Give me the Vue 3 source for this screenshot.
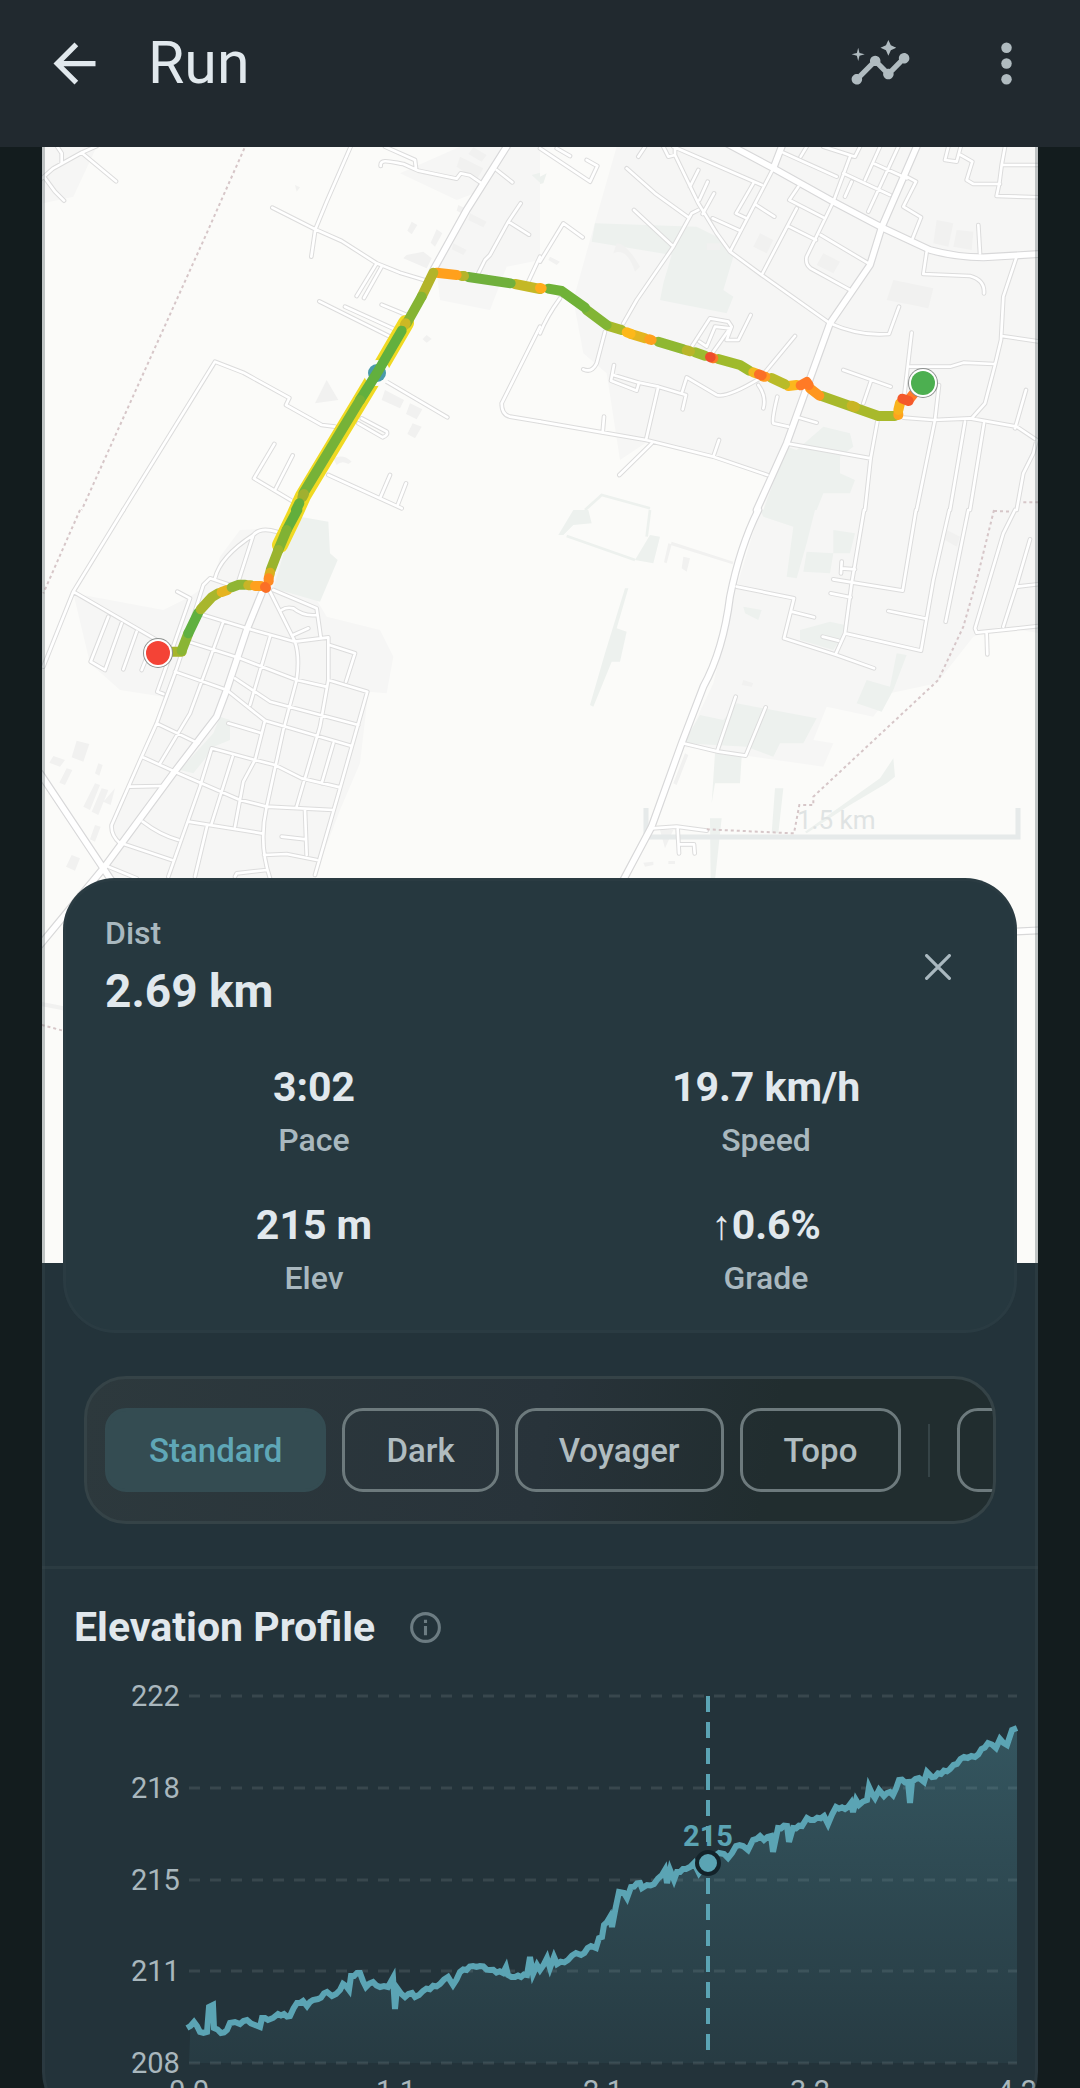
<template>
  <div class="screen">
    <header class="topbar">
      <button class="icon-btn" aria-label="Back">
        <svg class="ico" viewBox="0 0 24 24"><path d="M20 11H7.83l5.59-5.59L12 4l-8 8 8 8 1.41-1.41L7.83 13H20v-2z" /></svg>
      </button>
      <h1>Run</h1>
      <button class="icon-btn muted" aria-label="Insights">
        <svg class="ico" viewBox="0 0 24 24">
          <path d="M21 8c-1.45 0-2.26 1.44-1.93 2.51l-3.55 3.56c-.3-.09-.74-.09-1.04 0l-2.55-2.55C12.27 10.45 11.46 9 10 9c-1.45 0-2.27 1.44-1.93 2.52l-4.56 4.55C2.44 15.74 1 16.55 1 18c0 1.1.9 2 2 2 1.45 0 2.26-1.44 1.93-2.51l4.55-4.56c.3.09.74.09 1.04 0l2.55 2.55C12.73 16.55 13.54 18 15 18c1.45 0 2.27-1.44 1.93-2.52l3.56-3.55C21.56 12.26 23 11.45 23 10c0-1.1-.9-2-2-2z" />
          <path d="M15 9l.94-2.07L18 6l-2.06-.93L15 3l-.92 2.07L12 6l2.08.93zM3.5 11L4 9l2-.5L4 8l-.5-2L3 8l-2 .5L3 9z" />
        </svg>
      </button>
      <button class="icon-btn muted" aria-label="Menu">
        <svg class="ico" viewBox="0 0 24 24"><circle cx="12" cy="6" r="2" /><circle cx="12" cy="12" r="2" /><circle cx="12" cy="18" r="2" /></svg>
      </button>
    </header>

    <main class="panel">
      <svg class="map" viewBox="42 147 996 1116" preserveAspectRatio="xMidYMin slice">
        <rect x="42" y="147" width="996" height="1116" fill="#fbfbf9" />
        <g v-for="(t, i) in tiles" :key="'z' + i" :transform="tileTransform(t)">
          <path :d="t.urban" fill="#f6f6f5" />
          <path :d="t.green" fill="#edf1ee" />
          <path :d="t.buildings" fill="#f1f1f0" />
          <path :d="t.park" class="park" />
        </g>
        <path d="M646 808V837H1018V808" class="scale-bar" />
        <text x="797" y="829" class="scale-text">1.5 km</text>
        <g v-for="(t, i) in tiles" :key="'c' + i" :transform="tileTransform(t)">
          <path :d="t.minor" class="road minor-case" />
          <path :d="t.major" class="road major-case" />
        </g>
        <g v-for="(t, i) in tiles" :key="'r' + i" :transform="tileTransform(t)">
          <path :d="t.minor" class="road minor" />
          <path :d="t.major" class="road major" />
          <path :d="t.border" class="border" />
        </g>

        <!-- highlighted part of the track -->
        <path d="M406 323L377 373L303 496L294 516L280 545" class="highlight" />
        <circle cx="377" cy="373" r="13" fill="#fbfbf9" />
        <circle cx="377" cy="373" r="9" fill="#4a9aaa" />
        <g v-for="(t, i) in tiles" :key="'t' + i" :transform="tileTransform(t)">
          <path v-for="(s, j) in t.track" :key="j" :d="s[1]" :stroke="s[0]" class="track" />
        </g>
        <g v-for="m in markers" :key="m.color">
          <circle :cx="m.x" :cy="m.y" r="15" fill="#8d918f" />
          <circle :cx="m.x" :cy="m.y" r="14" fill="#fff" />
          <circle :cx="m.x" :cy="m.y" r="12" :fill="m.color" />
        </g>
      </svg>

      <section class="info">
        <div class="info-head">
          <div>
            <div class="label">Dist</div>
            <div class="dist">2.69 km</div>
          </div>
          <button class="close" aria-label="Close">
            <svg viewBox="0 0 24 24"><path d="M1.5 1.5l21 21M22.5 1.5l-21 21" /></svg>
          </button>
        </div>
        <div class="stats">
          <div v-for="s in stats" :key="s.label" class="stat">
            <div class="value">{{ s.value }}</div>
            <div class="label">{{ s.label }}</div>
          </div>
        </div>
      </section>

      <div class="layers">
        <button
          v-for="l in layers"
          :key="l"
          class="chip"
          :class="{ active: l === activeLayer }"
          @click="activeLayer = l"
        >{{ l }}</button>
        <span class="sep"></span>
        <button class="chip more" aria-label="More"></button>
      </div>

      <section class="elevation">
        <div class="title-row">
          <h2>Elevation Profile</h2>
          <svg class="hint" viewBox="0 0 24 24">
            <circle cx="12" cy="12" r="9" />
            <path d="M12 11v6M12 7v2" />
          </svg>
        </div>
        <svg class="chart" viewBox="42 1680 996 444">
          <defs>
            <linearGradient id="fill" gradientUnits="userSpaceOnUse" x1="0" y1="1696" x2="0" y2="2063">
              <stop offset="0" stop-color="#5ba4b4" stop-opacity=".33" />
              <stop offset="1" stop-color="#5ba4b4" stop-opacity=".07" />
            </linearGradient>
          </defs>
          <g v-for="g in grid" :key="g.label">
            <line x1="189" x2="1017" :y1="g.y" :y2="g.y" class="grid" />
            <text x="131" :y="g.y + 10" class="tick">{{ g.label }}</text>
          </g>
          <path :d="area" fill="url(#fill)" />
          <polyline :points="line" class="line" />
          <line x1="708" x2="708" y1="1696" y2="2054" class="cursor" />
          <text x="708" y="1846" class="cursor-text">215</text>
          <circle cx="708" cy="1863" r="11" class="cursor-dot" />
          <text v-for="t in ticks" :key="t.x" :x="t.x" y="2101" class="tick mid">{{ t.label }}</text>
        </svg>
      </section>
    </main>
  </div>
</template>

<script setup>
import { ref, computed } from 'vue';

const activeLayer = ref('Standard');
const layers = ['Standard', 'Dark', 'Voyager', 'Topo'];

const stats = [
  { value: '3:02', label: 'Pace' },
  { value: '19.7 km/h', label: 'Speed' },
  { value: '215 m', label: 'Elev' },
  { value: '↑0.6%', label: 'Grade' }
];

const markers = [
  { x: 158, y: 653, color: '#f44336' },
  { x: 923, y: 383, color: '#4caf50' }
];

// each tile is drawn in its own units, 3 per map pixel
const tileTransform = (t) => `translate(${t.x} ${t.y}) scale(0.33333)`;

const tiles = [
  {
    x: 40, y: 140,
    urban: 'M0 20H170L100 170L10 190ZM1080 100L1260 20H1500V360L1400 380L1350 510L1200 480L1190 390L1330 150L1250 180Z',
    green: 'M1475 105L1500 98V128Z',
    buildings: 'M1260 50L1330 85L1310 120L1250 80ZM1300 22L1340 45L1325 65L1285 42ZM1115 245L1132 255L1115 283L1102 272ZM1190 268L1207 280L1185 320L1172 308ZM1100 345L1150 335L1175 355L1160 385L1090 355ZM860 720L895 780L825 790ZM1035 750L1092 780L1080 805L1025 780ZM1110 790L1147 808L1130 838L1098 822ZM1118 850L1145 860L1125 895L1102 882ZM1255 195L1275 205L1265 220L1250 212ZM765 135L780 142L770 155ZM1160 585L1175 597L1160 608L1148 598ZM880 955Q910 940 935 965L925 972Q905 960 890 975ZM1290 220L1340 245L1330 262L1285 240ZM1240 310L1280 330L1270 345L1235 328Z',
    park: '',
    minor: 'M0 120L40 85L125 38L170 18M52 20L65 40V70M125 38L228 124M12 110L45 155L72 182M932 20L860 185L826 268L814 350M697 203L826 268L905 303L1010 370L1080 398L1160 422M1010 370L950 468M1025 380L972 474M1035 20L1125 60L1128 85M1022 78C1020 55 1050 65 1090 72L1135 92L1250 116L1262 100L1290 106L1325 130M1370 90L1417 127M1442 190L1405 245L1350 345L1335 360L1315 400M1405 245L1467 284M1500 350L1465 425M838 484L1050 590M915 500L1080 575M1025 494L1100 525M250 1110L525 665L610 698L748 774L738 795L845 855L885 860M1040 725L1222 832M965 835L1040 875Q1045 885 1028 892L955 850M703 912L642 1015L765 1088M758 946L705 1050M865 1005L1085 1105M1050 1005L1020 1075M1098 1030L1073 1095M1500 560L1385 790Q1385 825 1410 830L1500 845',
    major: 'M1400 20L1280 210L1180 390',
    border: 'M613 25L500 280L125 1110',
    track: [
      ['#c4b826', 'M1500 447L1425 432'],
      ['#70b03c', 'M1412 430L1285 411'],
      ['#b5b42b', 'M1265 408H1272'],
      ['#ffa01c', 'M1190 398L1250 405'],
      ['#b3b42a', 'M1180 398L1145 470'],
      ['#85b433', 'M1145 470L1100 550'],
      ['#cdb824', 'M1097 550L1094 556'],
      ['#62b03e', 'M1085 572L1011 699L960 780'],
      ['#76b238', 'M960 780L790 1060'],
      ['#a0b030', 'M792 1062L787 1072'],
      ['#62ae3c', 'M778 1090L768 1110']
    ]
  },
  {
    x: 540, y: 140,
    urban: 'M230 20H1500V1110H670L690 1000L330 900L240 960L200 700L130 640L100 480L150 300Z',
    green: 'M165 250L470 260L550 300L580 350L550 450L580 470L560 520L360 480L370 430L395 345L155 305ZM770 930L850 860L930 880L940 920L900 950V1000L945 1020L930 1060H850L830 1110H670L740 920Z M0 110L20 100L10 130L0 132Z',
    buildings: 'M1060 420L1180 445L1165 505L1040 480ZM1190 240L1240 250L1225 320L1180 310ZM1250 270L1300 275L1295 330L1240 320ZM230 310Q260 310 300 380L285 395Q260 320 220 340ZM660 280L700 300L680 340L640 320ZM850 340L900 365L880 400L830 375ZM500 310H540V330H500ZM30 350L60 365L50 375L25 360Z',
    park: 'M135 1110L185 1065L330 1105',
    minor: 'M0 25L150 125L172 78L140 60M50 25L90 48M260 85L345 160L445 232M282 210L395 315M295 50L315 20M370 20L385 50L405 45M405 20V45L475 190L530 280L570 335L665 405L870 550M400 20L665 135M475 90L450 140M503 125L478 180M522 160L488 222M475 210L455 220L400 320L290 480L250 550M640 130L588 220L620 235M700 85L570 335M518 235L600 272M648 195L703 230M775 140L748 180L855 235M770 205L665 405M748 260L828 300M880 185L800 350Q795 372 812 385L930 450M842 285L985 370M730 38L890 110M800 20L782 50M930 50L880 185M850 20L945 50L960 20M1020 20L975 120M1075 20L985 215M1000 70L1100 115M910 100L1050 165M935 125L915 170M1100 110L1128 125L1090 200L1143 232L1118 295M1225 20L1215 60L1250 65L1262 20M1262 45L1297 65L1280 120L1300 132H1380M1395 20L1385 75L1378 130L1370 168L1500 172M1385 75H1500M1315 255L1320 340M1160 335L1150 402L1290 408Q1335 420 1332 460M1430 350L1390 470L1383 600L1365 675L1335 790L1295 835M1385 588L1500 605M870 550Q960 590 1047 582L1077 500M1115 578L1090 790M1110 680H1230L1270 668L1362 672M910 690L1052 740M993 722L970 790M1197 735L1185 840L1130 1110M1090 833L1180 840L1290 835L1430 860L1490 900L1480 940L1450 1000L1430 1110M1458 750L1425 865M1275 845L1230 1110M1332 850L1290 1110M1012 845L992 955L975 1110M740 910L992 955M768 830L830 848M745 860L700 850Q695 840 712 770M655 735Q680 770 670 805M765 588L660 715Q560 775 530 765L440 712L425 760M222 675L213 722L290 752L297 728L355 740L438 765L428 808M220 705L297 728M355 740L318 900M195 575L170 670Q155 700 130 688M455 620L510 535L565 545L575 560L560 600H595L632 525M478 605L500 620L525 560L570 565L520 635M0 845L190 878L318 900L520 950L682 1005M192 830L188 878M537 900L520 950M335 910L238 1005M0 365L70 250L128 292M60 475Q20 530 0 580',
    major: 'M560 10L700 85L880 185L1025 262L1170 330Q1250 352 1330 352L1500 342M725 20L700 85M1130 20L1025 262L990 375L870 550L740 910L650 1110',
    border: 'M1450 1087H1500',
    track: [
      ['#a8b92b', 'M845 768L1015 828H1065'],
      ['#c9b524', 'M935 797L945 801'],
      ['#ffa31e', 'M1075 825V822'],
      ['#f9b31c', 'M1075 810L1080 790'],
      ['#ff7a2a', 'M1110 775L1130 750'],
      ['#f4592b', 'M1087 776L1106 783'],
      ['#ff961f', 'M810 745L838 767'],
      ['#fbb71c', 'M745 738L770 735'],
      ['#ff7a26', 'M782 736L800 726L806 735'],
      ['#b9bb28', 'M695 714L735 733'],
      ['#ff9a20', 'M670 710H676'],
      ['#9fba2c', 'M535 657L600 675L628 692'],
      ['#f0b81e', 'M640 697L648 700'],
      ['#fb6f26', 'M657 703L665 706'],
      ['#9bbb30', 'M465 637L495 647'],
      ['#fb7a26', 'M516 653L520 655'],
      ['#ee4d2d', 'M510 651L512 652'],
      ['#8fb832', 'M355 605L430 628'],
      ['#b9b52a', 'M440 631L450 634'],
      ['#e3b51f', 'M275 583L315 595'],
      ['#ffa01e', 'M328 598L335 600'],
      ['#a8b92b', 'M205 558L245 570'],
      ['#fdb81a', 'M260 577L272 581'],
      ['#82b535', 'M140 510L200 555'],
      ['#6fb238', 'M25 446L65 453L135 503'],
      ['#ffac1c', 'M0 444L5 445']
    ]
  },
  {
    x: 40, y: 510,
    urban: 'M700 55L600 60L540 140L520 210L450 260L370 300L100 250L150 460L240 540L370 560L330 680L210 960L240 1010L190 1110H820L900 900L960 760L985 545L1040 550L1060 440L1020 360L860 320L830 270Z',
    green: 'M780 20L865 35L870 130L893 150L840 275L700 235L740 100ZM540 620L570 630L570 690L510 715L500 740L460 790L420 780L520 670Z',
    buildings: 'M110 692L148 702L130 755L95 742ZM40 738L75 750L60 770L28 758ZM80 775L97 780L75 825L58 818ZM175 760L188 765L178 797L165 790ZM165 820L180 825L150 900L130 890ZM185 835L205 840L175 915L155 905ZM225 835L212 885L190 875ZM165 945L182 950L165 995L150 988ZM95 1035L120 1045L105 1082L78 1070ZM0 1475L80 1490V1503L0 1488Z',
    park: '',
    minor: 'M250 0L100 245L10 470M100 245L385 410M205 320L152 455L195 480L245 340M290 365L250 478M325 430L305 480M412 245L450 265L375 480L352 545L370 552M710 65Q660 50 640 75Q540 140 525 205M640 75L595 215M405 490L350 640L305 740L215 945Q212 975 240 1000M405 490L435 400M570 225L510 205L490 225L460 320M490 315L620 355L765 395L865 382V510L840 650L770 890M550 335L485 515L450 610L360 760M445 395L600 445L770 510L858 530M405 485L560 540M690 245L765 395Q780 440 770 510L730 660L680 890Q655 1000 690 1105M700 240L830 295L842 380M725 300Q740 290 760 295Q790 320 830 315M760 375L805 355M868 405L945 430L918 515M865 510L982 545L900 835L825 1095M690 380L630 585M585 505L690 575L955 645M560 540L675 632L935 708M675 632L645 750L610 815L585 950M565 640L660 668M350 640L475 700M305 740L415 790L600 870L680 890L880 900M515 715L645 750L705 765L785 805L900 832M515 715L480 830L385 1100M578 740L515 940M880 700L845 820M270 830L370 828M308 935Q360 975 415 990M245 1000L395 1050M445 935L665 970M502 945L465 1100M795 900L800 1035M725 980L798 988M672 1035L740 1032L830 1050M585 1100L590 1090L680 1080M205 1070L290 1105',
    major: 'M665 250L620 360L560 540L530 620L400 790L190 1075L0 1305M0 790L190 1075L240 1150',
    border: 'M120 0L10 250M5 1545L80 1565',
    track: [
      ['#a6b52b', 'M395 425H425'],
      ['#8ab534', 'M425 422L445 370'],
      ['#5fb040', 'M445 370L475 308'],
      ['#a8b62c', 'M482 298L515 262L535 250'],
      ['#e5b420', 'M545 246L562 240'],
      ['#8fb534', 'M575 232L597 224H615'],
      ['#c8b427', 'M625 226H632'],
      ['#62ae3c', 'M772 0L740 60'],
      ['#80b234', 'M740 60L715 120'],
      ['#9ab42e', 'M715 120L692 180'],
      ['#d9b020', 'M690 188L688 196'],
      ['#ffa01e', 'M645 228H662'],
      ['#ff8a22', 'M686 205V214'],
      ['#fb6f26', 'M675 231L678 234']
    ]
  },
  {
    x: 540, y: 510,
    urban: 'M660 0H1500V370L1380 350L1300 380L1190 520L1050 550L1000 620L860 590L820 690L880 700L850 770L430 710L520 520L590 230Z',
    green: 'M660 0H825L800 100L770 205L740 200L760 50L670 20ZM880 60L945 70L930 130H880ZM800 125L880 130L870 190L790 185ZM980 510L1050 530L1070 430L1100 435L1060 540L1025 605L950 580ZM480 615L550 630L590 580L830 625L790 700H720L700 740L620 710L430 700ZM525 730L605 740L600 820H525L515 880ZM705 835H730L715 970H695ZM255 235H265L230 355L260 365L240 455H215L160 590L150 585L195 430ZM1060 745L1065 800L1040 820L930 885L800 970L795 965L1020 805ZM330 75L360 80L340 160L285 150ZM610 290L665 300L655 330L615 310ZM780 360L870 335L915 345L900 390L880 420L780 390ZM510 925H545L525 1110H512ZM100 0H145L155 40L100 45L70 75H55Z',
    buildings: 'M395 95L580 155L578 163L392 105ZM385 100L395 103L380 160L372 157ZM430 140L450 145L440 185L425 175ZM310 1058L340 1055V1065L315 1070ZM385 1053H405V1062H385ZM360 960H400L375 1015ZM1220 60L1260 80L1250 110L1215 90ZM610 510L640 520L635 530L605 525ZM435 730L445 735L410 825L400 820Z',
    park: 'M80 78L285 150M330 0L320 80',
    minor: 'M590 230L762 265L732 385L890 435L1002 475M755 305L822 322M972 0L935 220L915 370L888 430M880 208L1088 242L1128 0M905 155L903 190M905 175L945 178M872 250L932 262M848 380L895 392M915 370L1143 422L1180 210L1228 0M1045 303L1158 326M1285 0L1217 335M1425 0L1390 70L1305 355L1310 368L1500 348M1340 368L1342 433M1470 88L1430 225L1390 350M1432 230L1500 222M430 700L535 725L617 737L677 592M587 560L532 722M335 955L410 950L500 962M413 958L417 1030M417 1003H462L464 1030',
    major: 'M655 0Q600 110 570 260Q550 420 490 530L425 700L335 950L250 1110M1420 1265L1500 1261',
    border: 'M1362 0L1310 210L1270 350L1195 510L820 860V885H778L762 970L500 958M1362 3L1415 5',
    track: []
  }
];

const grid = [222, 218, 215, 211, 208].map((label, i) => ({ label, y: 1696 + Math.round(i * 91.8) }));
const ticks = ['0.0', '1.1', '2.1', '3.2', '4.2'].map((label, i) => ({ label, x: 189 + i * 207 }));

const samples = [
  187, 2028, 194, 2022, 200, 2032, 207, 2032, 209, 2007, 213, 2005, 214, 2028, 221, 2033, 227, 2030, 230, 2023,
  235, 2022, 240, 2024, 247, 2020, 255, 2025, 260, 2027, 262, 2018, 268, 2020, 273, 2018, 278, 2014, 290, 2016,
  297, 2003, 303, 2001, 307, 2006, 313, 2000, 318, 1999, 327, 1992, 332, 1996, 340, 1990, 343, 1984, 349, 1990,
  351, 1976, 360, 1973, 366, 1987, 373, 1982, 380, 1987, 388, 1987, 393, 1978, 395, 2009, 397, 1988, 405, 1997,
  412, 1993, 415, 1997, 423, 1991, 440, 1984, 448, 1977, 453, 1985, 460, 1972, 473, 1966, 480, 1966, 490, 1970,
  503, 1973, 506, 1967, 508, 1975, 515, 1977, 527, 1975, 530, 1957, 533, 1974, 537, 1965, 540, 1970, 547, 1958,
  550, 1968, 554, 1957, 557, 1964, 568, 1960, 576, 1953, 581, 1955, 591, 1946, 596, 1948, 599, 1938, 602, 1937,
  604, 1925, 610, 1917, 612, 1927, 619, 1892, 624, 1893, 627, 1898, 631, 1887, 640, 1883, 642, 1888, 647, 1885,
  654, 1884, 662, 1875, 665, 1870, 667, 1883, 670, 1870, 674, 1880, 677, 1872, 686, 1869, 694, 1863, 699, 1873,
  705, 1867, 708, 1863, 719, 1853, 724, 1854, 728, 1858, 736, 1846, 743, 1846, 748, 1850, 753, 1840, 760, 1836,
  764, 1840, 771, 1836, 773, 1852, 778, 1828, 787, 1826, 789, 1842, 793, 1828, 802, 1826, 807, 1818, 814, 1820,
  824, 1816, 828, 1824, 836, 1807, 845, 1809, 851, 1803, 853, 1812, 856, 1800, 859, 1805, 867, 1800, 869, 1787,
  875, 1798, 879, 1790, 884, 1796, 890, 1792, 893, 1795, 899, 1780, 908, 1782, 910, 1803, 912, 1782, 919, 1778,
  924, 1782, 927, 1772, 932, 1777, 950, 1769, 964, 1757, 975, 1757, 988, 1743, 996, 1748, 1000, 1739, 1007, 1745,
  1012, 1730, 1017, 1728
];

// long gaps between samples get a few points in between, with a little sensor noise
const points = computed(() => {
  const out = [];
  let flip = 1;
  for (let i = 0; i < samples.length - 2; i += 2) {
    const [x, y, nx, ny] = samples.slice(i, i + 4);
    out.push(x, y);
    const n = Math.floor((nx - x) / 3);
    for (let k = 1; k < n; k++) {
      out.push(x + ((nx - x) * k) / n, y + ((ny - y) * k) / n + flip);
      flip = -flip;
    }
  }
  out.push(...samples.slice(-2));
  return out;
});
const line = computed(() => points.value.join(' '));
const area = computed(() => `M189 2063L${points.value.slice(2).join(' ')}L1017 2063Z`);
</script>

<style>
body { margin: 0; background: #131c1e; }
</style>

<style scoped>
.screen { height: 100vh; overflow: hidden; background: #131c1e; font-family: Roboto, "Noto Sans", sans-serif; color: #e1e8ed; }
button { font: inherit; color: inherit; background: none; border: none; padding: 0; margin: 0; cursor: pointer; }
h1, h2 { margin: 0; }

.topbar { display: flex; align-items: center; padding: 0 11px 21px; background: #21292f; }
.topbar h1 { flex: 1; margin-left: 11px; font-size: 59px; line-height: 70px; font-weight: 400; }
.icon-btn { display: flex; align-items: center; justify-content: center; width: 126px; height: 126px; }
.icon-btn.muted { color: #b0bbc0; }
.ico { width: 63px; height: 63px; fill: currentColor; }

.panel { position: relative; margin: 0 42px; background: #23333a; border-radius: 0 0 52px 52px; overflow: hidden; }
.panel::after { content: ""; position: absolute; inset: 0; border: 3px solid rgba(60, 75, 80, .3); border-top: none; border-radius: 0 0 52px 52px; pointer-events: none; }

.map { display: block; width: 100%; height: 1116px; }
.road { fill: none; stroke-linecap: round; stroke-linejoin: round; }
.minor-case { stroke: #dcdcdc; stroke-width: 14; }
.major-case { stroke: #d8d8d9; stroke-width: 24; }
.minor { stroke: #fff; stroke-width: 8; }
.major { stroke: #fff; stroke-width: 17; }
.park { fill: none; stroke: #edf1ee; stroke-width: 8; }
.border { fill: none; stroke: #d6c6c8; stroke-width: 6; stroke-dasharray: 9 9; }
.scale-bar { fill: none; stroke: #e6eaea; stroke-width: 5; }
.scale-text { font-size: 26px; fill: #dfe3e3; }
.highlight { fill: none; stroke: #f0d922; stroke-width: 16; stroke-linecap: round; stroke-linejoin: round; }
.track { fill: none; stroke-width: 30; stroke-linecap: round; stroke-linejoin: round; }

.info { position: relative; margin: -385px 21px 0; padding: 34px 42px; background: #26383f; border-radius: 52px; box-shadow: inset 0 0 0 3px rgba(60, 75, 80, .2); }
.info-head { display: flex; align-items: center; justify-content: space-between; }
.label { font-size: 32px; line-height: 42px; font-weight: 500; color: #a9b8bf; }
.dist { margin-top: 6px; font-size: 46px; line-height: 62px; font-weight: 700; }
.close { display: flex; align-items: center; justify-content: center; width: 74px; height: 74px; }
.close svg { width: 26px; height: 26px; fill: none; stroke: #a9b8bf; stroke-width: 3; stroke-linecap: round; }
.stats { display: grid; grid-template-columns: 1fr 1fr; gap: 39px 34px; margin-top: 40px; text-align: center; }
.value { margin-bottom: 7px; font-size: 41px; line-height: 50px; font-weight: 700; }

.layers { display: flex; align-items: center; gap: 16px; margin: 43px 42px 42px; padding: 29px 18px; border: 3px solid #354347; border-radius: 42px; background: linear-gradient(100deg, #2d393d, #28333a 50%, #212d2f 75%); overflow: hidden; }
.chip { flex: none; height: 84px; padding: 0 41px; border: 3px solid #6d7a7d; border-radius: 21px; font-size: 33px; font-weight: 500; color: #b0bcc0; }
.chip.active { border-color: #344c52; background: #344c52; color: #5fa7b7; }
.chip.more { width: 160px; }
.sep { flex: none; width: 2px; height: 53px; margin: 0 11px; background: #364447; }

.elevation { border-top: 3px solid #2b3b41; }
.title-row { display: flex; align-items: center; padding: 33px 32px 28px; }
.title-row h2 { font-size: 41px; line-height: 50px; font-weight: 700; }
.hint { width: 37px; height: 37px; margin-left: 32px; fill: none; stroke: #6c7c82; stroke-width: 2; }
.chart { display: block; width: 100%; }
.grid { stroke: #38474d; stroke-width: 3; stroke-dasharray: 11 10; }
.tick { font-size: 29px; fill: #a9b7bd; }
.mid { text-anchor: middle; }
.line { fill: none; stroke: #5ba4b4; stroke-width: 6; }
.cursor { stroke: #5ba4b4; stroke-width: 4; stroke-dasharray: 16 10; }
.cursor-text { font-size: 29px; font-weight: 700; fill: #5ba4b4; text-anchor: middle; }
.cursor-dot { fill: #5ba4b4; stroke: #13232a; stroke-width: 4; }
</style>
